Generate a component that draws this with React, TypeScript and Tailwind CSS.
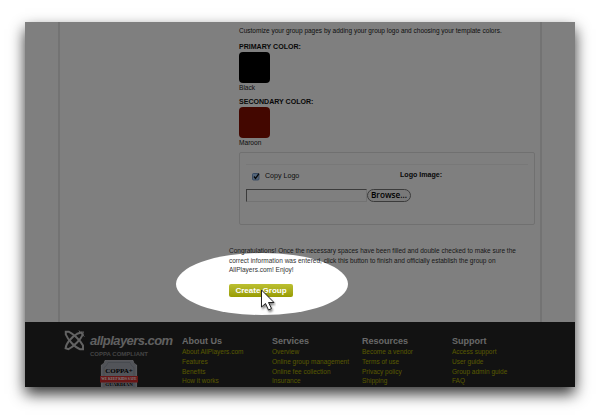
import React from "react";

const columns = [
  { title: "About Us", links: ["About AllPlayers.com", "Features", "Benefits", "How it works"] },
  { title: "Services", links: ["Overview", "Online group management", "Online fee collection", "Insurance"] },
  { title: "Resources", links: ["Become a vendor", "Terms of use", "Privacy policy", "Shipping"] },
  { title: "Support", links: ["Access support", "User guide", "Group admin guide", "FAQ"] },
];

function Swatch({ label, name, color }: { label: string; name: string; color: string }) {
  return (
    <div className="h-[55px]">
      <div className="h-[10px] text-[7.05px] leading-[10px] font-bold text-[#111]">{label}</div>
      <div className={`h-[31px] w-[31px] rounded-[4px] ${color}`} />
      <div className="h-[9px] text-[6.6px] leading-[9px] text-[#222]">{name}</div>
    </div>
  );
}

function Mark() {
  return (
    <svg viewBox="0 0 21 21" className="h-[21px] w-[21px] shrink-0" fill="none" stroke="#c4c4c4" strokeWidth="2">
      <path d="M1.8 4.5V1.8H5C9 3.5 16 10 19 15.5V19.2H16C11 17.5 4 10 1.8 4.5Z" />
      <path d="M12.5 4L17 2.5L18.8 4.5C17 9 10 16.5 4.5 19.2L1.6 18.3C1.8 14 7 7 13.5 3.6" />
      <path d="M15 0.5L16.2 2.6L19.5 1.8L18.4 4.4L20.3 6.6" strokeWidth="1" />
    </svg>
  );
}

function Badge() {
  return (
    <div className="relative h-[28px] w-[38px] font-['Liberation_Serif',serif] font-bold">
      <svg viewBox="0 0 38 28" className="absolute inset-0 h-[28px] w-[38px]">
        <path d="M5 0.4H33Q33 4 36.6 5V28H1.4V5Q5 4 5 0.4Z" fill="#a4a8b2" stroke="#d0d0d8" strokeWidth="0.8" />
        <path d="M8 2.5H30Q31 6 34 7.5V28H4V7.5Q7 6 8 2.5Z" fill="none" stroke="#858996" strokeWidth="0.6" />
        <rect x="0" y="16" width="38" height="6.5" fill="#d22c2c" />
      </svg>
      <div className="relative flex flex-col items-center text-center whitespace-nowrap text-black">
        <span className="mt-[7px] h-[9px] text-[7px] leading-[9px]">COPPA+</span>
        <span className="h-[6px] text-[3.5px] leading-[7px] text-white">WE KEEP KIDS SAFE</span>
        <span className="h-[5px] text-[5px] leading-[6px]">GUARDIAN</span>
      </div>
    </div>
  );
}

export default function App() {
  return (
    <div className="h-[420px] w-[600px] overflow-hidden bg-white pt-[22px] pl-[25px] font-['Liberation_Sans',Arial,sans-serif]">
      <div className="h-[365px] w-[550px] shadow-[0_7px_14px_0px_rgba(0,0,0,0.8)]">
        <div className="relative flex h-[365px] w-[550px] flex-col overflow-hidden bg-white">
          <main className="ml-[33px] h-[300px] w-[484px] shrink-0 border-x-2 border-[#e6e6e6] pl-[169px] whitespace-nowrap">
            <div className="pl-[10px]">
              <p className="pt-[4px] text-[6.5px] leading-[10px] text-[#222]">
                Customize your group pages by adding your group logo and choosing your template colors.
              </p>
              <div className="h-[6px]" />
              <Swatch label="PRIMARY COLOR:" name="Black" color="bg-black" />
              <Swatch label="SECONDARY COLOR:" name="Maroon" color="bg-[#860f00]" />
              <div className="h-[73px] w-[296px] rounded-[2px] border border-[#e0e0e0] px-[6px] pt-[11px]">
                <div className="border-t border-[#f0f0f0]" />
                <div className="flex h-[24px] items-center pl-[6px]">
                  <svg viewBox="0 0 8 8" className="h-2 w-2">
                    <rect x="0.5" y="0.5" width="6.5" height="6.5" rx="1" fill="#a8ccf4" stroke="#5880b8" strokeWidth="0.8" />
                    <path d="M2 3.5L3.5 5.5L7 0.6" fill="none" stroke="#111" strokeWidth="1.3" />
                  </svg>
                  <span className="ml-[5px] w-[135px] pb-px text-[7.1px] text-[#222]">Copy Logo</span>
                  <span className="pb-[4px] text-[7.1px] font-bold text-[#111]">Logo Image:</span>
                </div>
                <div className="flex items-center">
                  <div className="h-[13px] w-[121px] border border-[#e6e6e6] border-t-[#777] border-l-[#777]" />
                  <div className="flex h-[13px] w-[44px] items-center justify-center rounded-full border border-[#777] bg-[#f2f2f2] font-['Open_Sans',sans-serif] text-[8.2px] leading-none font-semibold text-black">
                    Browse...
                  </div>
                </div>
              </div>
            </div>
            <p className="mt-[21px] text-[6.5px] leading-[9.7px] text-[#333]">
              Congratulations! Once the necessary spaces have been filled and double checked to make sure the
              <br />
              correct information was entered, click this button to finish and officially establish the group on
              <br />
              AllPlayers.com! Enjoy!
            </p>
            <button className="mt-[9px] flex h-[13px] w-[64px] items-center justify-center rounded-[2px] bg-linear-to-b from-[#bcc030] to-[#989c00] text-[8px] leading-none font-bold text-white">
              Create Group
            </button>
          </main>
          <footer className="flex h-[65px] shrink-0 bg-[#242424] pl-[39px] whitespace-nowrap">
            <div className="w-[118px] pt-[9px]">
              <div className="flex h-[19px] items-center">
                <Mark />
                <span className="ml-[5px] text-[13px] leading-none font-bold tracking-[-0.55px] text-[#c0c0c0] italic">allplayers.com</span>
              </div>
              <div className="ml-[26px] h-[10px] text-[6px] leading-[8px] font-bold text-[#888]">COPPA COMPLIANT</div>
              <div className="ml-[36px]">
                <Badge />
              </div>
            </div>
            {columns.map((column) => (
              <div key={column.title} className="w-[90px] pt-[13px]">
                <h3 className="h-[12px] text-[9px] leading-[12px] font-bold text-[#d0d0d0]">{column.title}</h3>
                {column.links.map((link) => (
                  <div key={link} className="h-[9.8px] text-[6.5px] leading-[9.8px] text-[#b0b000]">{link}</div>
                ))}
              </div>
            ))}
          </footer>
          <div className="pointer-events-none absolute top-[231px] left-[151px] h-[62px] w-[172px] rounded-[50%] shadow-[0_0_0_600px_rgba(0,0,0,0.5)]" />
          <svg viewBox="0 0 16 26" className="absolute top-[267px] left-[235px] h-[26px] w-4">
            <path d="M1.5 1V18L5.5 14.5L8.5 21L11.5 19.5L8.5 13.5H14Z" fill="#fff" stroke="#222" strokeWidth="1" className="drop-shadow-[1px_2px_1px_rgba(0,0,0,0.5)]" />
          </svg>
        </div>
      </div>
    </div>
  );
}
